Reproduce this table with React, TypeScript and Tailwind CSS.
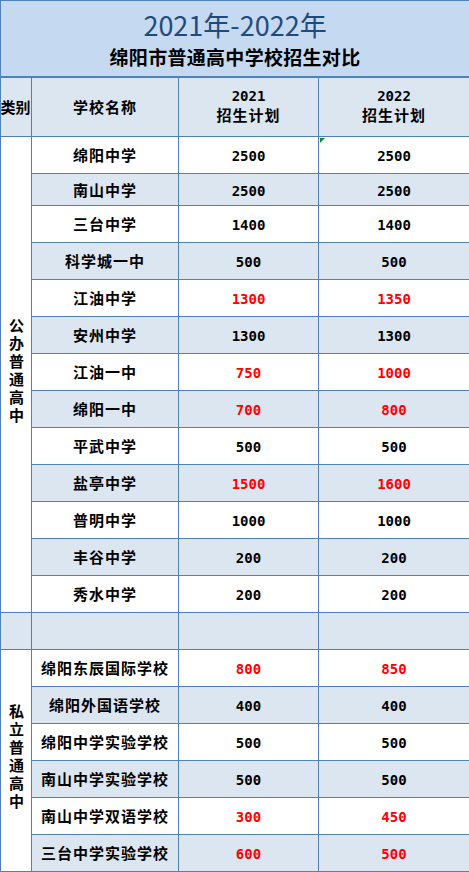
import React from "react";

interface Row {
    name: string;
    y2021: number;
    y2022: number;
    red?: boolean;
    h?: string;
}

const publicRows: Row[] = [
    { name: "绵阳中学", y2021: 2500, y2022: 2500 },
    { name: "南山中学", y2021: 2500, y2022: 2500, h: "h-[32px]" },
    { name: "三台中学", y2021: 1400, y2022: 1400 },
    { name: "科学城一中", y2021: 500, y2022: 500 },
    { name: "江油中学", y2021: 1300, y2022: 1350, red: true },
    { name: "安州中学", y2021: 1300, y2022: 1300 },
    { name: "江油一中", y2021: 750, y2022: 1000, red: true },
    { name: "绵阳一中", y2021: 700, y2022: 800, red: true },
    { name: "平武中学", y2021: 500, y2022: 500 },
    { name: "盐亭中学", y2021: 1500, y2022: 1600, red: true },
    { name: "普明中学", y2021: 1000, y2022: 1000 },
    { name: "丰谷中学", y2021: 200, y2022: 200 },
    { name: "秀水中学", y2021: 200, y2022: 200 },
];

const privateRows: Row[] = [
    { name: "绵阳东辰国际学校", y2021: 800, y2022: 850, red: true },
    { name: "绵阳外国语学校", y2021: 400, y2022: 400 },
    { name: "绵阳中学实验学校", y2021: 500, y2022: 500 },
    { name: "南山中学实验学校", y2021: 500, y2022: 500 },
    { name: "南山中学双语学校", y2021: 300, y2022: 450, red: true },
    { name: "三台中学实验学校", y2021: 600, y2022: 500, red: true },
];

const cjk = "font-['Noto_Sans_CJK_SC',sans-serif]";
const mono = "font-['DejaVu_Sans_Mono','Noto_Sans_CJK_SC',monospace]";
const cell = "border border-[#4f81bd] p-0 text-center align-middle";

// vertical label in the merged category column
const Category = ({ label }: { label: string }) => (
    <span
        className={`inline-block [writing-mode:vertical-rl] [text-orientation:upright] text-[15px] leading-[18px] tracking-[3px] font-bold text-black ${cjk}`}
    >
        {label}
    </span>
);

const DataRow = ({
    row,
    index,
    category,
    span,
    flag,
}: {
    row: Row;
    index: number;
    category?: string;
    span?: number;
    flag?: boolean;
}) => {
    const bg = index % 2 === 1 ? "bg-[#dce6f1]" : "bg-white";
    const num = row.red ? "text-[#ff0000]" : "text-black";
    return (
        <tr className={row.h || "h-[37px]"}>
            {category && (
                <td rowSpan={span} className={`${cell} bg-white`}>
                    <Category label={category} />
                </td>
            )}
            <td className={`${cell} ${bg}`}>
                <span className={`text-[15px] font-bold tracking-[1px] text-black ${cjk}`}>{row.name}</span>
            </td>
            <td className={`${cell} ${bg}`}>
                <span className={`text-[14px] font-bold ${mono} ${num}`}>{row.y2021}</span>
            </td>
            <td className={`${cell} ${bg} relative`}>
                {/* excel error marker */}
                {flag && (
                    <span className="absolute left-[1px] top-[1px] h-0 w-0 border-t-[5px] border-r-[5px] border-t-[#138a2c] border-r-transparent" />
                )}
                <span className={`text-[14px] font-bold ${mono} ${num}`}>{row.y2022}</span>
            </td>
        </tr>
    );
};

const App: React.FC = () => {
    return (
        <div className="w-[469px] h-[872px] bg-white">
            <table className="w-[469px] table-fixed border-collapse">
                <colgroup>
                    <col className="w-[31px]" />
                    <col className="w-[147px]" />
                    <col className="w-[140px]" />
                    <col className="w-[151px]" />
                </colgroup>
                <tbody>
                    <tr className="h-[76px]">
                        <td colSpan={4} className={`${cell} border-b-2 bg-[#c5d9f1]`}>
                            <div className={`text-[27px] leading-[36px] text-[#1f4a7d] ${cjk}`}>2021年-2022年</div>
                            <div className={`text-[19px] leading-[27px] font-bold tracking-[0.3px] text-black ${cjk}`}>
                                绵阳市普通高中学校招生对比
                            </div>
                        </td>
                    </tr>
                    <tr className="h-[60px] bg-[#dce6f1]">
                        <td className={`${cell} overflow-hidden`}>
                            <div className={`-ml-[1px] whitespace-nowrap text-[15px] font-bold text-black ${cjk}`}>类别</div>
                        </td>
                        <td className={cell}>
                            <span className={`text-[15px] font-bold tracking-[1px] text-black ${cjk}`}>学校名称</span>
                        </td>
                        <td className={cell}>
                            <div className={`text-[14px] leading-[17px] font-bold text-black ${mono}`}>2021</div>
                            <div className={`text-[15px] leading-[20px] font-bold tracking-[1px] text-black ${cjk}`}>招生计划</div>
                        </td>
                        <td className={cell}>
                            <div className={`text-[14px] leading-[17px] font-bold text-black ${mono}`}>2022</div>
                            <div className={`text-[15px] leading-[20px] font-bold tracking-[1px] text-black ${cjk}`}>招生计划</div>
                        </td>
                    </tr>
                    {publicRows.map((row, i) => (
                        <DataRow
                            key={row.name}
                            row={row}
                            index={i}
                            category={i === 0 ? "公办普通高中" : undefined}
                            span={publicRows.length}
                            flag={i === 0}
                        />
                    ))}
                    <tr className="h-[37px] bg-[#dce6f1]">
                        <td className={cell} />
                        <td className={cell} />
                        <td className={cell} />
                        <td className={cell} />
                    </tr>
                    {privateRows.map((row, i) => (
                        <DataRow
                            key={row.name}
                            row={row}
                            index={i}
                            category={i === 0 ? "私立普通高中" : undefined}
                            span={privateRows.length}
                        />
                    ))}
                </tbody>
            </table>
        </div>
    );
};

export default App;
